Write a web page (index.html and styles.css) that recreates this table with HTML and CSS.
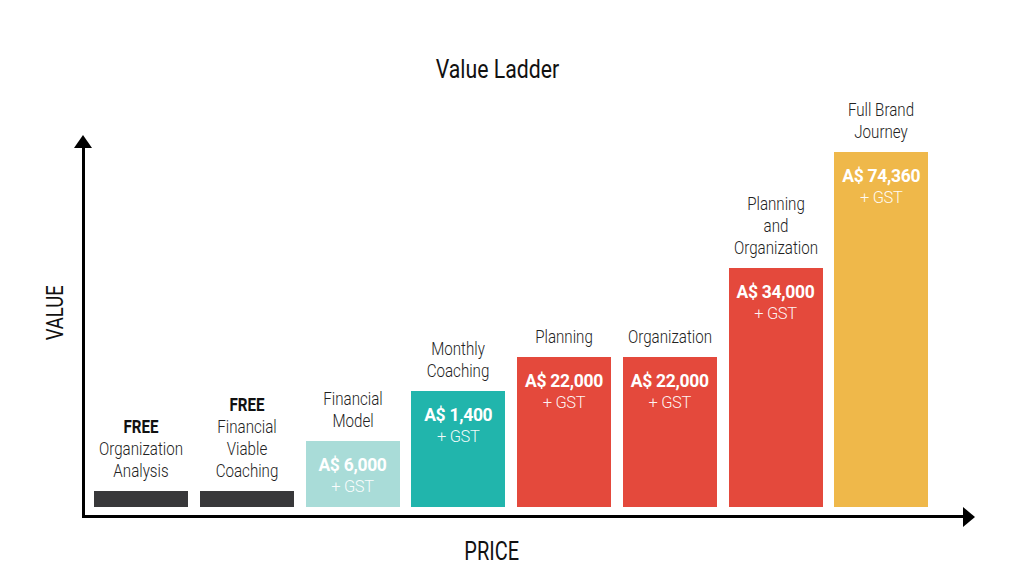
FILE: index.html
```html
<!DOCTYPE html>
<html lang="en">
<head>
<meta charset="utf-8">
<title>Value Ladder</title>
<link rel="stylesheet" href="styles.css">
</head>
<body>
<div class="page">
  <div class="title-wrap"><h1 class="title">Value Ladder</h1></div>
  <div class="chart-row">
    <div class="y-label">VALUE</div>
    <div class="plot">
      <div class="col">
        <div class="label"><b>FREE</b><br>Organization<br>Analysis</div>
        <div class="bar bar-dark" style="height:16px"></div>
      </div>
      <div class="col">
        <div class="label"><b>FREE</b><br>Financial<br>Viable<br>Coaching</div>
        <div class="bar bar-dark" style="height:16px"></div>
      </div>
      <div class="col">
        <div class="label">Financial<br>Model</div>
        <div class="bar bar-mint" style="height:66px"><span class="price">A$ 6,000</span><span class="gst">+ GST</span></div>
      </div>
      <div class="col">
        <div class="label">Monthly<br>Coaching</div>
        <div class="bar bar-teal" style="height:116px"><span class="price">A$ 1,400</span><span class="gst">+ GST</span></div>
      </div>
      <div class="col">
        <div class="label">Planning</div>
        <div class="bar bar-red" style="height:150px"><span class="price">A$ 22,000</span><span class="gst">+ GST</span></div>
      </div>
      <div class="col">
        <div class="label">Organization</div>
        <div class="bar bar-red" style="height:150px"><span class="price">A$ 22,000</span><span class="gst">+ GST</span></div>
      </div>
      <div class="col">
        <div class="label">Planning<br>and<br>Organization</div>
        <div class="bar bar-red" style="height:239px"><span class="price">A$ 34,000</span><span class="gst">+ GST</span></div>
      </div>
      <div class="col">
        <div class="label">Full Brand<br>Journey</div>
        <div class="bar bar-gold" style="height:355px"><span class="price">A$ 74,360</span><span class="gst">+ GST</span></div>
      </div>
    </div>
  </div>
  <div class="x-label-wrap"><span class="x-label">PRICE</span></div>
</div>
</body>
</html>
```
FILE: styles.css
```css
html, body {
  margin: 0;
  padding: 0;
  background: #ffffff;
}

body {
  width: 1024px;
  height: 584px;
  overflow: hidden;
  font-family: Roboto, "Liberation Sans", sans-serif;
  color: #1c1c1c;
}

.page {
  display: flex;
  flex-direction: column;
}

.title-wrap {
  margin-top: 55px;
  padding-right: 30px;
  text-align: center;
}

.title {
  display: inline-block;
  margin: 0;
  font-size: 25.3px;
  line-height: 30px;
  font-weight: 400;
  color: #111111;
  white-space: nowrap;
  transform: scaleX(0.84);
}

.chart-row {
  display: flex;
  margin-top: 62px;
  padding-left: 40px;
}

.y-label {
  writing-mode: vertical-rl;
  transform: rotate(180deg) scaleY(0.77);
  font-size: 24px;
  line-height: 30px;
  width: 30px;
  font-weight: 400;
  margin-top: 130px;
  margin-right: 12px;
  align-self: flex-start;
  white-space: nowrap;
  color: #111111;
}

.plot {
  position: relative;
  box-sizing: border-box;
  width: 882px;
  height: 371px;
  border-left: 3px solid #000000;
  border-bottom: 3px solid #000000;
  padding: 0 0 8px 9px;
  display: flex;
  align-items: flex-end;
  gap: 11.75px;
}

.plot::before {
  content: "";
  position: absolute;
  top: -12px;
  left: -11px;
  width: 0;
  height: 0;
  border-left: 9.5px solid transparent;
  border-right: 9.5px solid transparent;
  border-bottom: 13px solid #000000;
}

.plot::after {
  content: "";
  position: absolute;
  right: -11px;
  bottom: -12px;
  width: 0;
  height: 0;
  border-top: 10px solid transparent;
  border-bottom: 10px solid transparent;
  border-left: 12px solid #000000;
}

.col {
  flex: 0 0 94px;
  width: 94px;
  min-width: 0;
  display: flex;
  flex-direction: column;
}

.label {
  margin: 0 -25px 9px;
  text-align: center;
  font-size: 18.7px;
  line-height: 22px;
  font-weight: 300;
  white-space: nowrap;
  color: #222222;
  transform: scaleX(0.81);
}

.label b {
  color: #111111;
  font-weight: 700;
}

.bar {
  box-sizing: border-box;
  display: flex;
  flex-direction: column;
  align-items: center;
  padding-top: 14px;
  color: #ffffff;
  white-space: nowrap;
}

.price {
  font-weight: 700;
  font-size: 17.5px;
  line-height: 21px;
  letter-spacing: -0.3px;
}

.gst {
  font-size: 16.5px;
  line-height: 21px;
  font-weight: 300;
  letter-spacing: -0.4px;
  color: rgba(255, 255, 255, 0.95);
}

.bar-dark { background: #38383a; }
.bar-mint { background: #a9dcd8; }
.bar-teal { background: #21b5ac; }
.bar-red  { background: #e4493c; }
.bar-gold { background: #efb84a; }

.x-label-wrap {
  margin-top: 20px;
  padding-right: 41px;
  text-align: center;
}

.x-label {
  display: inline-block;
  font-size: 25.3px;
  line-height: 28px;
  font-weight: 400;
  color: #111111;
  transform: scaleX(0.79);
}
```
